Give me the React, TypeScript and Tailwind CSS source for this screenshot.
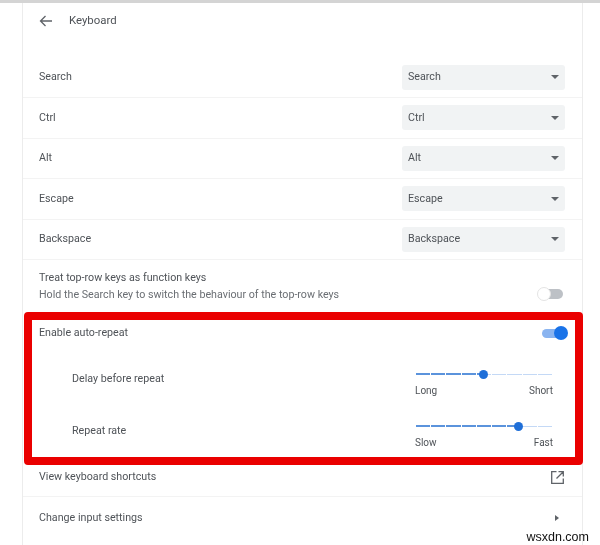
import React from "react";

const rows = ["Search", "Ctrl", "Alt", "Escape", "Backspace"];

const SelectRow = ({ label }: { label: string }) => (
  <div className="flex h-[40.5px] items-center justify-between border-b border-[#f3f3f3] pl-[16px] pr-[17px]">
    <span>{label}</span>
    <div className="flex h-[25px] w-[163px] items-center justify-between rounded-[3px] bg-[#f1f3f4] pl-[6px] pr-[6px]">
      <span>{label}</span>
      <svg width="8" height="4" viewBox="0 0 8 4">
        <path d="M0 0h8L4 4z" fill="#5f6368" />
      </svg>
    </div>
  </div>
);

const Toggle = ({ on }: { on: boolean }) =>
  on ? (
    <div className="relative h-[9px] w-[24px] rounded-full bg-[#8ab4f0]">
      <div className="absolute right-[-2px] top-[-2.5px] h-[14px] w-[14px] rounded-full bg-[#1a73e8]" />
    </div>
  ) : (
    <div className="relative h-[10px] w-[24px] rounded-full bg-[#bdc1c6]">
      <div className="absolute left-[-2px] top-[-2px] h-[14px] w-[14px] rounded-full border border-[#e4e4e4] bg-white" />
    </div>
  );

const Slider = ({ value, left, right }: { value: number; left: string; right: string }) => {
  const ticks = Array.from({ length: 10 }, (_, i) => i);
  return (
    <div className="mt-[1px] w-[138px]">
      <div className="relative h-[2px] w-full">
        <div className="absolute left-0 top-[0.5px] h-px w-full bg-[#c4d9f6]" />
        <div className="absolute left-0 top-0 h-[2px] bg-[#5b93dc]" style={{ width: `${value}%` }} />
        <div className="absolute inset-0 flex justify-between">
          {ticks.map((t) => (
            <div key={t} className="h-[2px] w-px bg-[#ffffff]" />
          ))}
        </div>
        <div
          className="absolute top-[-3.5px] ml-[-4.5px] h-[9px] w-[9px] rounded-full bg-[#1f6fd8]"
          style={{ left: `${value}%` }}
        />
      </div>
      <div className="mt-[10px] flex justify-between text-[10px] leading-[12px]">
        <span>{left}</span>
        <span>{right}</span>
      </div>
    </div>
  );
};

const SliderRow = ({ label, value, left, right }: { label: string; value: number; left: string; right: string }) => (
  <div className="flex h-[52px] items-start justify-between pl-[40px] pr-[22px] pt-[20px]">
    <span className="leading-[14px]">{label}</span>
    <Slider value={value} left={left} right={right} />
  </div>
);

export default function App() {
  return (
    <div className="relative h-[545px] w-[600px] overflow-hidden bg-white font-['Roboto',sans-serif] text-[10.7px] text-[#4f5358] blur-[0.35px]">
      <div className="h-[3px] bg-[#d4d4d4]" />
      <div className="ml-[22px] h-[542px] w-[561px] border-x border-[#ececec]">
        <div className="flex h-[36px] items-center pl-[16px]">
          <svg width="13" height="12" viewBox="0 0 13 12" fill="none" stroke="#5f6368" strokeWidth="1.3">
            <path d="M13 6H1.5M6.5 1 1.5 6l5 5" />
          </svg>
          <span className="ml-[17px] text-[11.4px]">Keyboard</span>
        </div>
        <div className="h-[18.5px]" />
        {rows.map((r) => (
          <SelectRow key={r} label={r} />
        ))}
        <div className="flex h-[52px] items-center justify-between pb-[1px] pl-[16px] pr-[19px]">
          <div className="leading-[17px]">
            <div>Treat top-row keys as function keys</div>
            <div className="text-[#6a6e73]">Hold the Search key to switch the behaviour of the top-row keys</div>
          </div>
          <div className="mt-[16px]">
            <Toggle on={false} />
          </div>
        </div>
        <div className="ml-[1px] h-[153px] w-[559px] rounded-[4px] border-8 border-[#ea0000]">
          <div className="flex h-[32px] items-center justify-between pb-[6px] pl-[7px] pr-[9px]">
            <span>Enable auto-repeat</span>
            <Toggle on />
          </div>
          <SliderRow label="Delay before repeat" value={49.5} left="Long" right="Short" />
          <SliderRow label="Repeat rate" value={75} left="Slow" right="Fast" />
        </div>
        <div className="flex h-[32px] items-center justify-between border-b border-[#f3f3f3] pl-[16px] pr-[18px]">
          <span className="relative top-[-3px]">View keyboard shortcuts</span>
          <svg className="relative top-[-3px]" width="13" height="13" viewBox="0 0 13 13" fill="none" stroke="#5f6368" strokeWidth="1.3">
            <path d="M5.5.7H.7v11.6h11.6V7.5M7.5.7h4.8v4.8M12.3.7 5.5 7.5" />
          </svg>
        </div>
        <div className="flex h-[42px] items-center justify-between pl-[16px] pr-[23px]">
          <span>Change input settings</span>
          <svg width="4" height="6" viewBox="0 0 4 6">
            <path d="M0 0l4 3-4 3z" fill="#5f6368" />
          </svg>
        </div>
      </div>
      <div className="absolute bottom-[-1px] right-[11px] font-['Liberation_Sans',sans-serif] text-[12.5px] leading-[18px] text-[#111]">
        wsxdn.com
      </div>
    </div>
  );
}
